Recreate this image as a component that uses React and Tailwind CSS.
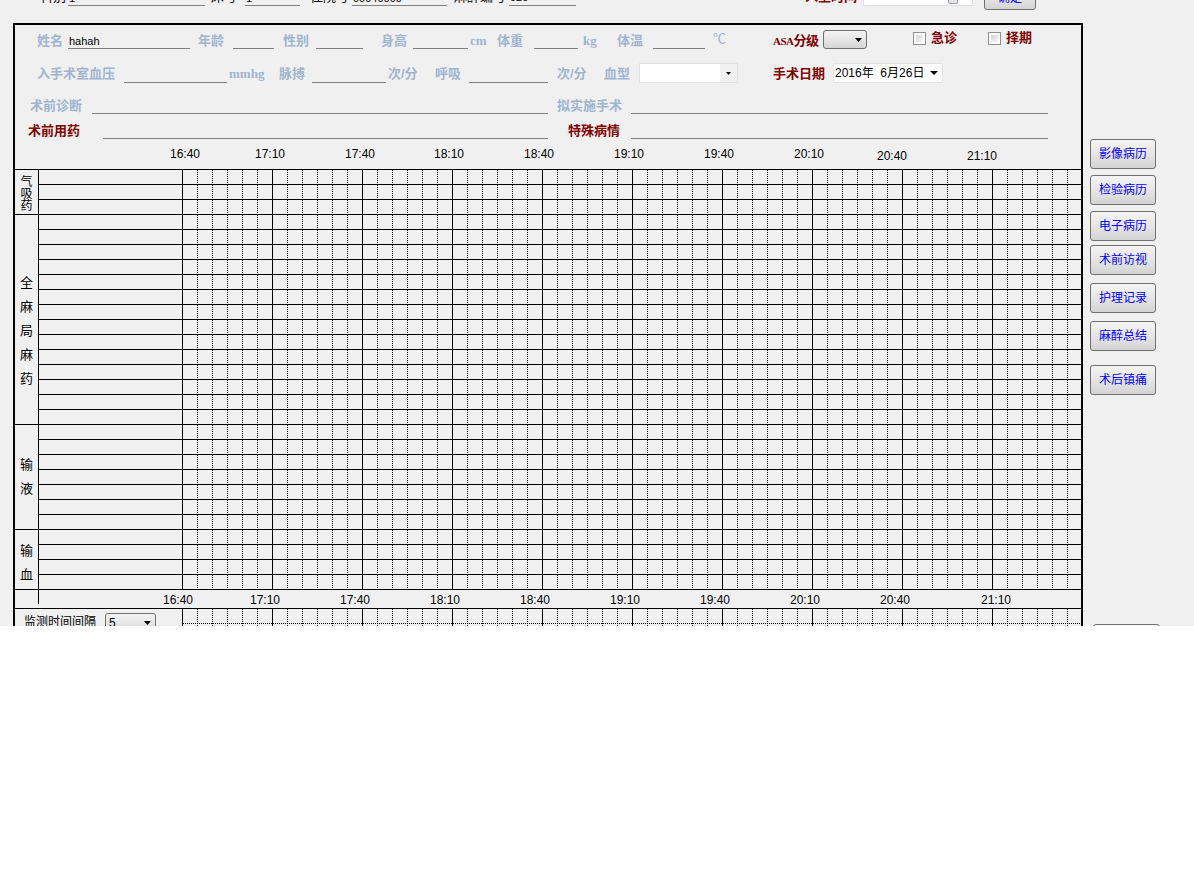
import React from "react";

// colours taken from the form
const blue = "text-[#9fb5cf]";
const red = "text-[#800000]";

const Label = ({ className = "", children }) => (
  <span className={`shrink-0 whitespace-nowrap text-[13px] leading-[14px] font-bold ${className}`}>
    {children}
  </span>
);

const Line = ({ className = "", children }) => (
  <span className={`shrink-0 border-b border-[#808080] text-[11px] leading-[14px] text-black whitespace-nowrap ${className}`}>
    {children}
  </span>
);

const Arrow = ({ className = "", w = 7, h = 4 }) => (
  <svg width={w} height={h} viewBox={`0 0 ${w} ${h}`} className={className}>
    <path d={`M0 0H${w}L${w / 2} ${h}Z`} fill="#000" />
  </svg>
);

const Check = ({ className = "" }) => (
  <span className={`shrink-0 w-[13px] h-[13px] border border-[#8e8f8f] bg-white p-[2px] ${className}`}>
    <span className="block w-full h-full bg-linear-to-br from-[#d4d4d4] to-[#f7f7f7]" />
  </span>
);

const WinButton = ({ className = "", children }) => (
  <button className={`shrink-0 rounded-[3px] border border-[#707070] bg-linear-to-b from-[#f4f4f4] via-[#e6e6e6] to-[#d3d3d3] text-[12px] text-[#0000ff] ${className}`}>
    {children}
  </button>
);

const ticks = Array.from({ length: 59 }, (_, k) => ({
  x: 14.5 + 15 * k,
  major: k % 6 === 5,
}));

const TimeCols = ({ h, hline }) => (
  <svg width="898" height={h} className="block shrink-0" shapeRendering="crispEdges">
    {ticks.map((t) => (
      <line
        key={t.x}
        x1={t.x}
        x2={t.x}
        y1="0"
        y2={h}
        stroke="#000"
        strokeDasharray={t.major ? undefined : "1 1"}
      />
    ))}
    {hline && <line x1="0" x2="898" y1={hline} y2={hline} stroke="#000" strokeDasharray="1 1" />}
  </svg>
);

const Section = ({ rows, children }) => (
  <div className="flex">
    <div className="w-[24px] shrink-0 border-r border-b border-black flex flex-col items-center justify-center text-[13px] text-black">
      {children}
    </div>
    <div className="flex-1">
      {Array.from({ length: rows }).map((_, i) => (
        <div key={i} className="flex h-[15px] border-b border-black">
          <div className="w-[144px] shrink-0 border-r border-black" />
          <TimeCols h={14} />
        </div>
      ))}
    </div>
  </div>
);

const topTimes = [
  ["16:40", "ml-[155px] mt-[8px]"],
  ["17:10", "ml-[55px] mt-[8px]"],
  ["17:40", "ml-[60px] mt-[8px]"],
  ["18:10", "ml-[59px] mt-[8px]"],
  ["18:40", "ml-[60px] mt-[8px]"],
  ["19:10", "ml-[60px] mt-[8px]"],
  ["19:40", "ml-[60px] mt-[8px]"],
  ["20:10", "ml-[60px] mt-[8px]"],
  ["20:40", "ml-[53px] mt-[10px]"],
  ["21:10", "ml-[60px] mt-[10px]"],
];

const bottomTimes = [
  ["16:40", "ml-[124px]"],
  ["17:10", "ml-[57px]"],
  ["17:40", "ml-[60px]"],
  ["18:10", "ml-[60px]"],
  ["18:40", "ml-[60px]"],
  ["19:10", "ml-[60px]"],
  ["19:40", "ml-[60px]"],
  ["20:10", "ml-[60px]"],
  ["20:40", "ml-[60px]"],
  ["21:10", "ml-[71px]"],
];

const sideButtons = [
  ["影像病历", "mt-0"],
  ["检验病历", "mt-[6px]"],
  ["电子病历", "mt-[6px]"],
  ["术前访视", "mt-[4px]"],
  ["护理记录", "mt-[8px]"],
  ["麻醉总结", "mt-[8px]"],
  ["术后镇痛", "mt-[14px]"],
];

export default function App() {
  return (
    <div className="w-[1194px] h-[879px] bg-white font-['Liberation_Sans','Noto_Sans_CJK_SC',sans-serif] text-black">
      <div className="h-[626px] overflow-hidden bg-[#f0f0f0] flex flex-col">
        {/* top strip, mostly scrolled out of view */}
        <div className="flex items-end h-[20px] -mt-[14px] shrink-0">
          <Label className="ml-[40px] w-[26px] font-normal mb-[2px]">科别</Label>
          <Line className="ml-[2px] w-[137px] h-[15px] pl-[1px]">1</Line>
          <Label className="ml-[6px] w-[26px] font-normal mb-[2px]">床号</Label>
          <Line className="ml-[8px] w-[55px] h-[15px] pl-[1px]">1</Line>
          <Label className="ml-[10px] w-[39px] font-normal mb-[2px]">住院号</Label>
          <Line className="ml-[3px] w-[95px] h-[15px] pl-[1px]">00040000</Line>
          <Label className="ml-[7px] w-[52px] font-normal mb-[2px]">麻醉编号</Label>
          <Line className="ml-[3px] w-[67px] h-[16px] pl-[1px]">920</Line>
          <Label className={`ml-[229px] w-[52px] mb-[2px] ${red}`}>入室时间</Label>
          <span className="ml-[6px] w-[110px] h-[20px] shrink-0 border border-[#dcdfe6] bg-white flex items-end justify-end pr-[14px] pb-[1px]">
            <span className="w-[10px] h-[6px] rounded-b-[2px] border border-t-0 border-[#9a9a9a] bg-[#e4e4e4]" />
          </span>
          <WinButton className="ml-[11px] w-[52px] h-[24px] self-start">确定</WinButton>
        </div>

        <div className="flex mt-[17px] shrink-0">
          {/* main record panel */}
          <div className="ml-[13px] w-[1070px] shrink-0 border-2 border-black">
            <div className="h-[144px] flex flex-col pt-[5px]">
              <div className="flex items-end h-[19px] shrink-0">
                <Label className={`ml-[22px] w-[26px] mb-[1px] ${blue}`}>姓名</Label>
                <Line className="ml-[5px] w-[122px] h-[15px] pl-[1px]">hahah</Line>
                <Label className={`ml-[8px] w-[26px] mb-[1px] ${blue}`}>年龄</Label>
                <Line className="ml-[9px] w-[41px] h-[15px]" />
                <Label className={`ml-[9px] w-[26px] mb-[1px] ${blue}`}>性别</Label>
                <Line className="ml-[7px] w-[47px] h-[15px]" />
                <Label className={`ml-[18px] w-[26px] mb-[1px] ${blue}`}>身高</Label>
                <Line className="ml-[6px] w-[55px] h-[15px]" />
                <Label className={`ml-[2px] w-[12px] mb-[1px] text-[10px] font-['Liberation_Serif',serif] ${blue}`}>cm</Label>
                <Label className={`ml-[15px] w-[26px] mb-[1px] ${blue}`}>体重</Label>
                <Line className="ml-[11px] w-[44px] h-[15px]" />
                <Label className={`ml-[5px] w-[14px] mb-[1px] text-[10px] font-['Liberation_Serif',serif] ${blue}`}>kg</Label>
                <Label className={`ml-[20px] w-[26px] mb-[1px] ${blue}`}>体温</Label>
                <Line className="ml-[10px] w-[52px] h-[15px]" />
                <Label className={`ml-[8px] w-[12px] mb-[3px] font-normal text-[12px] ${blue}`}>℃</Label>
                <Label className={`ml-[48px] w-[46px] mb-[1px] text-[12px] tracking-[-0.5px] ${red}`}>
                  <span className="text-[11px] font-['Liberation_Serif',serif]">ASA</span>分级
                </Label>
                <span className="ml-[4px] w-[44px] h-[19px] shrink-0 rounded-[3px] border border-[#707070] bg-linear-to-b from-[#f3f3f3] via-[#e6e6e6] to-[#d4d4d4] flex items-center justify-end pr-[4px]">
                  <Arrow />
                </span>
                <Check className="ml-[46px] mb-[4px]" />
                <Label className={`ml-[5px] w-[26px] mb-[4px] ${red}`}>急诊</Label>
                <Check className="ml-[31px] mb-[4px]" />
                <Label className={`ml-[5px] w-[26px] mb-[4px] ${red}`}>择期</Label>
              </div>

              <div className="flex items-end h-[20px] mt-[14px] shrink-0">
                <Label className={`ml-[22px] w-[78px] mb-[2px] ${blue}`}>入手术室血压</Label>
                <Line className="ml-[9px] w-[103px] h-[15px]" />
                <Label className={`ml-[2px] w-[30px] mb-[2px] text-[10px] font-['Liberation_Serif',serif] ${blue}`}>mmhg</Label>
                <Label className={`ml-[20px] w-[26px] mb-[2px] ${blue}`}>脉搏</Label>
                <Line className="ml-[7px] w-[74px] h-[15px]" />
                <Label className={`ml-[2px] w-[33px] mb-[2px] ${blue}`}>次/分</Label>
                <Label className={`ml-[14px] w-[26px] mb-[2px] ${blue}`}>呼吸</Label>
                <Line className="ml-[8px] w-[79px] h-[15px]" />
                <Label className={`ml-[9px] w-[33px] mb-[2px] ${blue}`}>次/分</Label>
                <Label className={`ml-[14px] w-[26px] mb-[2px] ${blue}`}>血型</Label>
                <span className="ml-[9px] w-[99px] h-[20px] shrink-0 border border-[#e3e3e3] bg-white flex justify-end">
                  <span className="w-[17px] h-full bg-[#f0f0f0] flex items-center justify-center">
                    <Arrow w={5} h={3} />
                  </span>
                </span>
                <Label className={`ml-[35px] w-[52px] mb-[2px] ${red}`}>手术日期</Label>
                <span className="ml-[8px] w-[110px] h-[20px] shrink-0 border border-[#e3e3e3] bg-white flex items-center pl-[1px] pr-[4px] text-[12px] leading-[14px] whitespace-nowrap">
                  <span className="flex-1">2016年 &nbsp;6月26日</span>
                  <Arrow w={8} h={4} />
                </span>
              </div>

              <div className="flex items-end h-[16px] mt-[15px] shrink-0">
                <Label className={`ml-[15px] w-[52px] mb-[1px] ${blue}`}>术前诊断</Label>
                <Line className="ml-[10px] w-[456px] h-[16px]" />
                <Label className={`ml-[9px] w-[65px] mb-[1px] ${blue}`}>拟实施手术</Label>
                <Line className="ml-[9px] w-[417px] h-[16px]" />
              </div>

              <div className="flex items-end h-[16px] mt-[9px] shrink-0">
                <Label className={`ml-[13px] w-[52px] mb-[1px] ${red}`}>术前用药</Label>
                <Line className="ml-[23px] w-[445px] h-[16px]" />
                <Label className={`ml-[20px] w-[52px] mb-[1px] ${red}`}>特殊病情</Label>
                <Line className="ml-[11px] w-[417px] h-[15px]" />
              </div>

              <div className="flex h-[30px] shrink-0">
                {topTimes.map(([t, c]) => (
                  <span key={t} className={`w-[30px] shrink-0 text-[12px] leading-[14px] whitespace-nowrap ${c}`}>
                    {t}
                  </span>
                ))}
              </div>
            </div>

            {/* drug / fluid grid */}
            <div className="border-t border-black">
              <Section rows={3}>
                <div className="flex flex-col items-center text-[12px] leading-[12px] pt-[4px]">
                  <span>气</span>
                  <span>吸</span>
                  <span>药</span>
                </div>
              </Section>
              <Section rows={14}>
                <div className="flex flex-col items-center leading-[24px] pt-[22px]">
                  <span>全</span>
                  <span>麻</span>
                  <span>局</span>
                  <span>麻</span>
                  <span>药</span>
                </div>
              </Section>
              <Section rows={7}>
                <div className="flex flex-col items-center leading-[24px]">
                  <span>输</span>
                  <span>液</span>
                </div>
              </Section>
              <Section rows={4}>
                <div className="flex flex-col items-center leading-[24px] pt-[6px]">
                  <span>输</span>
                  <span>血</span>
                </div>
              </Section>

              <div className="flex h-[19px] border-b border-black">
                <div className="w-[24px] h-[14px] shrink-0 border-r border-black" />
                {bottomTimes.map(([t, c]) => (
                  <span key={t} className={`w-[30px] shrink-0 mt-[3px] text-[12px] leading-[14px] whitespace-nowrap ${c}`}>
                    {t}
                  </span>
                ))}
              </div>

              <div className="flex h-[40px]">
                <div className="w-[168px] shrink-0 border-r border-black flex items-start">
                  <span className="ml-[9px] mt-[6px] w-[72px] shrink-0 text-[12px] leading-[14px] whitespace-nowrap">监测时间间隔</span>
                  <span className="ml-[9px] mt-[4px] w-[51px] h-[20px] shrink-0 rounded-[3px] border border-[#707070] bg-linear-to-b from-[#f3f3f3] via-[#e6e6e6] to-[#d4d4d4] flex items-center justify-between pl-[3px] pr-[4px] text-[12px]">
                    <span>5</span>
                    <Arrow />
                  </span>
                </div>
                <TimeCols h={40} hline={14.5} />
              </div>
            </div>
          </div>

          {/* side buttons */}
          <div className="ml-[7px] pt-[116px] flex flex-col items-start">
            {sideButtons.map(([t, c]) => (
              <WinButton key={t} className={`w-[66px] h-[30px] ${c}`}>
                {t}
              </WinButton>
            ))}
            <WinButton className="ml-[3px] mt-[229px] w-[67px] h-[30px]">确定</WinButton>
          </div>
        </div>
      </div>
    </div>
  );
}
